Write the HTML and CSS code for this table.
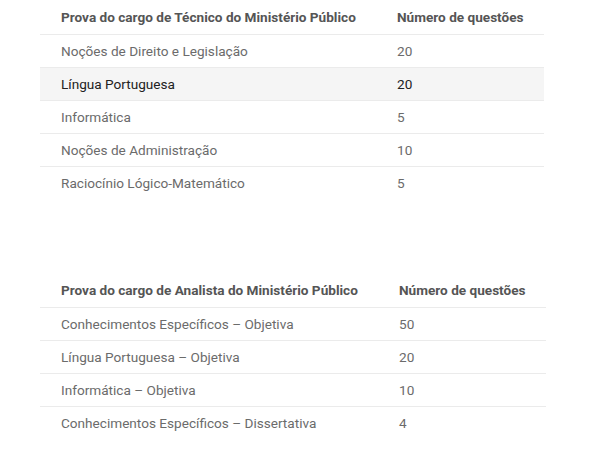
FILE: index.html
```html
<!DOCTYPE html>
<html lang="pt">
<head>
<meta charset="utf-8">
<link rel="stylesheet" href="styles.css">
</head>
<body>
<div class="page">
  <table class="exam exam-tecnico">
    <thead>
      <tr><th class="c1">Prova do cargo de Técnico do Ministério Público</th><th class="c2">Número de questões</th></tr>
    </thead>
    <tbody>
      <tr><td>Noções de Direito e Legislação</td><td>20</td></tr>
      <tr class="hover"><td>Língua Portuguesa</td><td>20</td></tr>
      <tr><td>Informática</td><td>5</td></tr>
      <tr><td>Noções de Administração</td><td>10</td></tr>
      <tr class="last"><td>Raciocínio Lógico-Matemático</td><td>5</td></tr>
    </tbody>
  </table>
  <table class="exam exam-analista">
    <thead>
      <tr><th class="c1">Prova do cargo de Analista do Ministério Público</th><th class="c2">Número de questões</th></tr>
    </thead>
    <tbody>
      <tr><td>Conhecimentos Específicos – Objetiva</td><td>50</td></tr>
      <tr><td>Língua Portuguesa – Objetiva</td><td>20</td></tr>
      <tr><td>Informática – Objetiva</td><td>10</td></tr>
      <tr class="last"><td>Conhecimentos Específicos – Dissertativa</td><td>4</td></tr>
    </tbody>
  </table>
</div>
</body>
</html>
```

FILE: styles.css
```css
html, body {
  margin: 0;
  padding: 0;
  background: #ffffff;
}
body {
  font-family: Roboto, "Liberation Sans", sans-serif;
  font-size: 13.6px;
  color: #666666;
}
.page {
  padding: 0 0 0 40px;
  display: flex;
  flex-direction: column;
  gap: 74px;
}
.exam {
  border-collapse: collapse;
  table-layout: fixed;
}
.exam-tecnico { width: 504px; }
.exam-analista { width: 506px; }
.exam-tecnico .c1 { width: 315px; }
.exam-analista .c1 { width: 317px; }
.exam th,
.exam td {
  text-align: left;
  padding: 0 0 0 21px;
  height: 32px;
  line-height: 20px;
  border-bottom: 1px solid #ebebeb;
  vertical-align: middle;
  white-space: nowrap;
}
.exam th {
  font-weight: 700;
  color: #555555;
  height: 34px;
}
.exam td {
  font-weight: 400;
  color: #6b6b6b;
}
.exam tr.hover td {
  background: #f5f5f5;
  color: #222222;
}
.exam tr.last td {
  border-bottom: none;
}
```
